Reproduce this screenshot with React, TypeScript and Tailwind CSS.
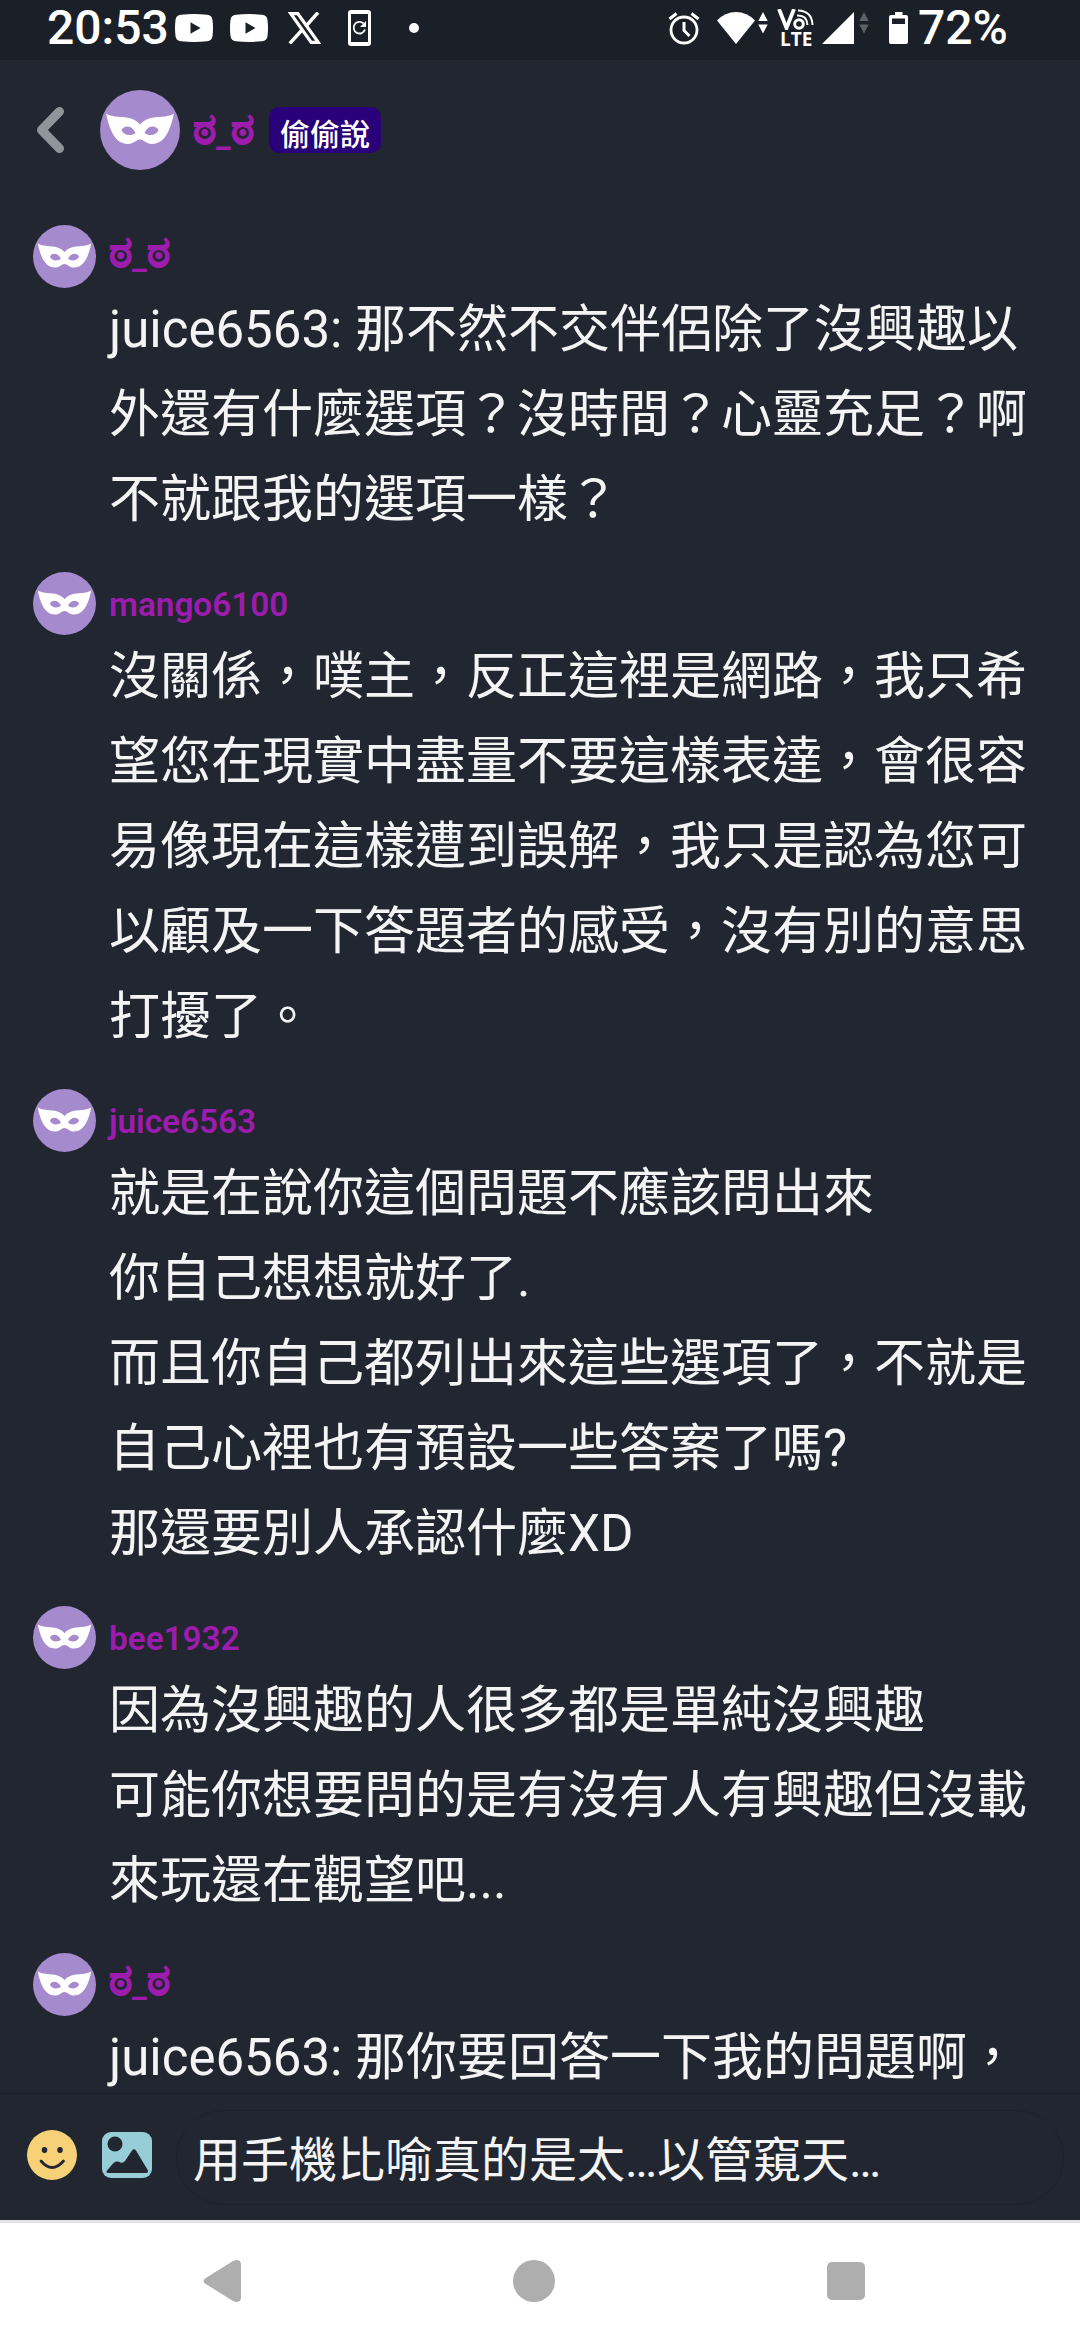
import { ReactNode } from 'react'

interface Message {
  author: string
  lines: string[]
}

const messages: Message[] = [
  {
    author: 'ಠ_ಠ',
    lines: [
      'juice6563: 那不然不交伴侶除了沒興趣以',
      '外還有什麼選項？沒時間？心靈充足？啊',
      '不就跟我的選項一樣？'
    ]
  },
  {
    author: 'mango6100',
    lines: [
      '沒關係，噗主，反正這裡是網路，我只希',
      '望您在現實中盡量不要這樣表達，會很容',
      '易像現在這樣遭到誤解，我只是認為您可',
      '以顧及一下答題者的感受，沒有別的意思',
      '打擾了。'
    ]
  },
  {
    author: 'juice6563',
    lines: [
      '就是在說你這個問題不應該問出來',
      '你自己想想就好了.',
      '而且你自己都列出來這些選項了，不就是',
      '自己心裡也有預設一些答案了嗎?',
      '那還要別人承認什麼XD'
    ]
  },
  {
    author: 'bee1932',
    lines: [
      '因為沒興趣的人很多都是單純沒興趣',
      '可能你想要問的是有沒有人有興趣但沒載',
      '來玩還在觀望吧...'
    ]
  },
  {
    author: 'ಠ_ಠ',
    lines: ['juice6563: 那你要回答一下我的問題啊，']
  }
]

function Avatar({ className }: { className: string }) {
  return (
    <svg viewBox="0 0 80 80" className={`shrink-0 ${className}`}>
      <circle cx="40" cy="40" r="40" fill="#a58acd" />
      <path
        fill="#fff"
        fillRule="evenodd"
        d="M6 23.500C13 28 23 26 31 28.500C35.500 30 38 32 40 34.500C42 32 44.500 30 49 28.500C57 26 67 28 74 23.500C71 37 66 54 52 54C46 54 44 49.500 40 49.500C36 49.500 34 54 28 54C14 54 9 37 6 23.500ZM21.500 40C24 35 32 35 35.500 43C31 46.500 23.500 45.500 21.500 40ZM58.500 40C56 35 48 35 44.500 43C49 46.500 56.500 45.500 58.500 40Z"
      />
    </svg>
  )
}

function YoutubeIcon() {
  return (
    <svg viewBox="0 0 38 28" className="h-7 w-[38px]">
      <path fill="#fff" fillRule="evenodd" d="M6 .7Q19-.5 32 .7Q37 1 37.500 6Q38.500 14 37.500 22Q37 27 32 27.300Q19 28.500 6 27.300Q1 27 .5 22Q-.5 14 .5 6Q1 1 6 .7ZM15.500 8.300V19.700L25.500 14Z" />
    </svg>
  )
}

function DataArrows({ className }: { className: string }) {
  return (
    <svg viewBox="0 0 10 22" className={`h-[22px] w-[10px] ${className}`}>
      <path fill="currentColor" d="M5 0L9.700 9H.3ZM.3 12.500H9.700L5 21.500Z" />
    </svg>
  )
}

// Kannada letters fall back to a smaller face, so they are set larger than the Latin text
function Nickname({ name }: { name: string }) {
  return (
    <>
      {name.split(/(ಠ)/).map((part, i) =>
        part === 'ಠ' ? (
          <span key={i} className="align-[2px] text-[44px] leading-none font-bold [-webkit-text-stroke:0.8px_#9d1cad]">{part}</span>
        ) : (
          part
        )
      )}
    </>
  )
}

function StatusBar() {
  return (
    <div className="flex h-[60px] shrink-0 items-start bg-[#1b1f27] pl-[47px] text-white">
      <span className="w-[128px] text-[48px] leading-[56px] font-medium">20:53</span>
      <div className="flex h-[56px] items-center">
        <YoutubeIcon />
        <div className="ml-[17px]">
          <YoutubeIcon />
        </div>
        <svg viewBox="0 0 33 32" className="ml-[20px] h-8 w-[33px]">
          <path fill="none" stroke="#fff" strokeWidth="3.200" d="M2.800 1.600H9.800L30.200 30.400H23.200Z" />
          <path fill="none" stroke="#fff" strokeWidth="3.400" d="M30 .5L18.500 13.500M14 18L1.800 31.500" />
        </svg>
        <svg viewBox="0 0 23 36" className="ml-[27px] h-9 w-[23px]">
          <path fill="#fff" fillRule="evenodd" d="M3 0H20Q23 0 23 3V33Q23 36 20 36H3Q0 36 0 33V3Q0 0 3 0ZM3 4V32H20V4Z" />
          <path fill="none" stroke="#fff" strokeWidth="1.800" d="M15.500 13.500A5.800 5.800 0 1 0 17 19.500" />
          <path fill="#fff" d="M18 11V17H12Z" />
        </svg>
        <span className="ml-[38px] size-[10px] rounded-full bg-white" />
      </div>
      <div className="ml-auto flex h-[56px] items-center pr-[73px]">
        <svg viewBox="0 0 32 33" className="h-[33px] w-8" fill="none" stroke="#fff">
          <circle cx="16" cy="18" r="13" strokeWidth="2.800" />
          <path strokeWidth="3" d="M1.500 7L8.500 1.500M30.500 7L23.500 1.500M16 10V18.500L21.500 24" />
        </svg>
        <svg viewBox="0 0 38 32" className="ml-[17px] h-8 w-[38px]">
          <path fill="#fff" d="M0 8.500Q8 0 19 0T38 8.500L19 32Z" />
        </svg>
        <DataArrows className="ml-[3px] -mt-2.5 text-white" />
        <div className="ml-[9px] flex w-[37px] flex-col">
          <svg viewBox="0 0 37 21" className="h-[21px] w-[37px]" fill="none" stroke="#fff">
            <path strokeWidth="3.800" d="M2 0L9.500 19L17 0" />
            <circle cx="22" cy="15" r="4.300" strokeWidth="3" />
            <path strokeWidth="2" d="M20 6.500Q30 6 30.500 16M21 1.500Q35 2 35.500 16" />
          </svg>
          <span className="pl-[3px] font-['Open_Sans'] text-[19px] leading-[18px] font-bold">LTE</span>
        </div>
        <svg viewBox="0 0 32 32" className="ml-[8px] h-8 w-8">
          <path fill="#fff" d="M32 0V32H0Z" />
        </svg>
        <DataArrows className="ml-[5px] -mt-2.5 text-[#5d6067]" />
        <svg viewBox="0 0 19 32" className="ml-[20px] h-8 w-[19px]">
          <path fill="#fff" fillRule="evenodd" d="M6 0H13.500V3H17Q19 3 19 5V30Q19 32 17 32H2Q0 32 0 30V5Q0 3 2 3H6ZM3 6.500V12H16V6.500Z" />
        </svg>
        <span className="ml-[10px] w-[89px] text-[48px] leading-[56px] font-medium">72%</span>
      </div>
    </div>
  )
}

function Header() {
  return (
    <header className="flex h-[140px] shrink-0 items-center pl-[36px]">
      <svg viewBox="0 0 28 46" className="h-[46px] w-7">
        <path fill="none" stroke="#90959b" strokeWidth="9" strokeLinecap="round" strokeLinejoin="round" d="M23.500 4.500L5.500 23L23.500 41.500" />
      </svg>
      <Avatar className="ml-[36px] size-20" />
      <span className="ml-[13px] h-[46px] w-[76px] text-[33px] leading-[46px] font-bold whitespace-nowrap text-[#9d1cad]">
        <Nickname name="ಠ_ಠ" />
      </span>
      <span className="flex h-[46px] w-[112px] items-center justify-center rounded-[10px] bg-[#2a007a] pt-[9px] text-[30px] leading-[37px] font-medium text-white">
        偷偷說
      </span>
    </header>
  )
}

function MessageRow({ author, lines }: Message) {
  return (
    <article className="flex pb-[29px]">
      <Avatar className="size-[63px]" />
      <div className="pl-[13px]">
        <h2 className="h-[62px] pt-px text-[33.3px] leading-[63px] font-semibold text-[#9d1cad]">
          <Nickname name={author} />
        </h2>
        {lines.map((line) => (
          <p key={line} className="h-[85px] text-[51px] leading-[85px] whitespace-nowrap">{line}</p>
        ))}
        <div className="h-px" />
      </div>
    </article>
  )
}

function Composer() {
  return (
    <footer className="flex h-[127px] shrink-0 items-center border-t border-[#1b1f29] pl-[27px]">
      <svg viewBox="0 0 50 50" className="mb-[5px] size-[50px]">
        <circle cx="25" cy="25" r="25" fill="#f7d177" />
        <ellipse cx="17.500" cy="20" rx="2.800" ry="3" fill="#212631" />
        <ellipse cx="33" cy="20" rx="2.800" ry="3" fill="#212631" />
        <path fill="none" stroke="#212631" strokeWidth="2.800" strokeLinecap="round" d="M14 31Q25 44 36.500 31" />
      </svg>
      <svg viewBox="0 0 50 46" className="mb-[5px] ml-[25px] h-[46px] w-[50px]">
        <rect width="50" height="46" rx="9" fill="#97cdd6" />
        <circle cx="13" cy="12" r="7.500" fill="#212631" />
        <path fill="#212631" d="M5 38.500L11.500 31Q15 28.500 18.500 30.500Q21 31.500 23 29L30 18.500Q32 16 34 18.500L46 38.500Q46.500 41 44 41H6Q3.500 41 5 38.500Z" />
      </svg>
      <Field>用手機比喻真的是太…以管窺天…</Field>
    </footer>
  )
}

function Field({ children }: { children: ReactNode }) {
  return (
    <div className="ml-[24px] h-[95px] w-[888px] rounded-full border-[1.5px] border-[#1d222c] pl-[16px] text-[48px] leading-[100px] whitespace-nowrap">
      {children}
    </div>
  )
}

function NavBar() {
  return (
    <nav className="flex h-[120px] shrink-0 items-center border-t-[3px] border-[#e2e1e6] bg-white pb-px pl-[203px]">
      <svg viewBox="0 0 38 42" className="h-[42px] w-[38px]">
        <path fill="#aeaeae" d="M2 18.500L30 1Q38-2 38 5V37Q38 44 30 41L2 23.500Q-1 21 2 18.500Z" />
      </svg>
      <span className="ml-[272px] size-[42px] rounded-full bg-[#aeaeae]" />
      <span className="ml-[272px] size-[38px] rounded-[5px] bg-[#aeaeae]" />
    </nav>
  )
}

export default function App() {
  return (
    <div className="flex h-[2340px] w-[1080px] flex-col overflow-hidden bg-[#212631] font-[Roboto,'Noto_Sans_CJK_TC',sans-serif] text-[#f4f4f4]">
      <StatusBar />
      <Header />
      <main className="min-h-0 flex-1 overflow-hidden pt-[25px] pl-[33px]">
        {messages.map((message, i) => (
          <MessageRow key={i} {...message} />
        ))}
      </main>
      <Composer />
      <NavBar />
    </div>
  )
}
